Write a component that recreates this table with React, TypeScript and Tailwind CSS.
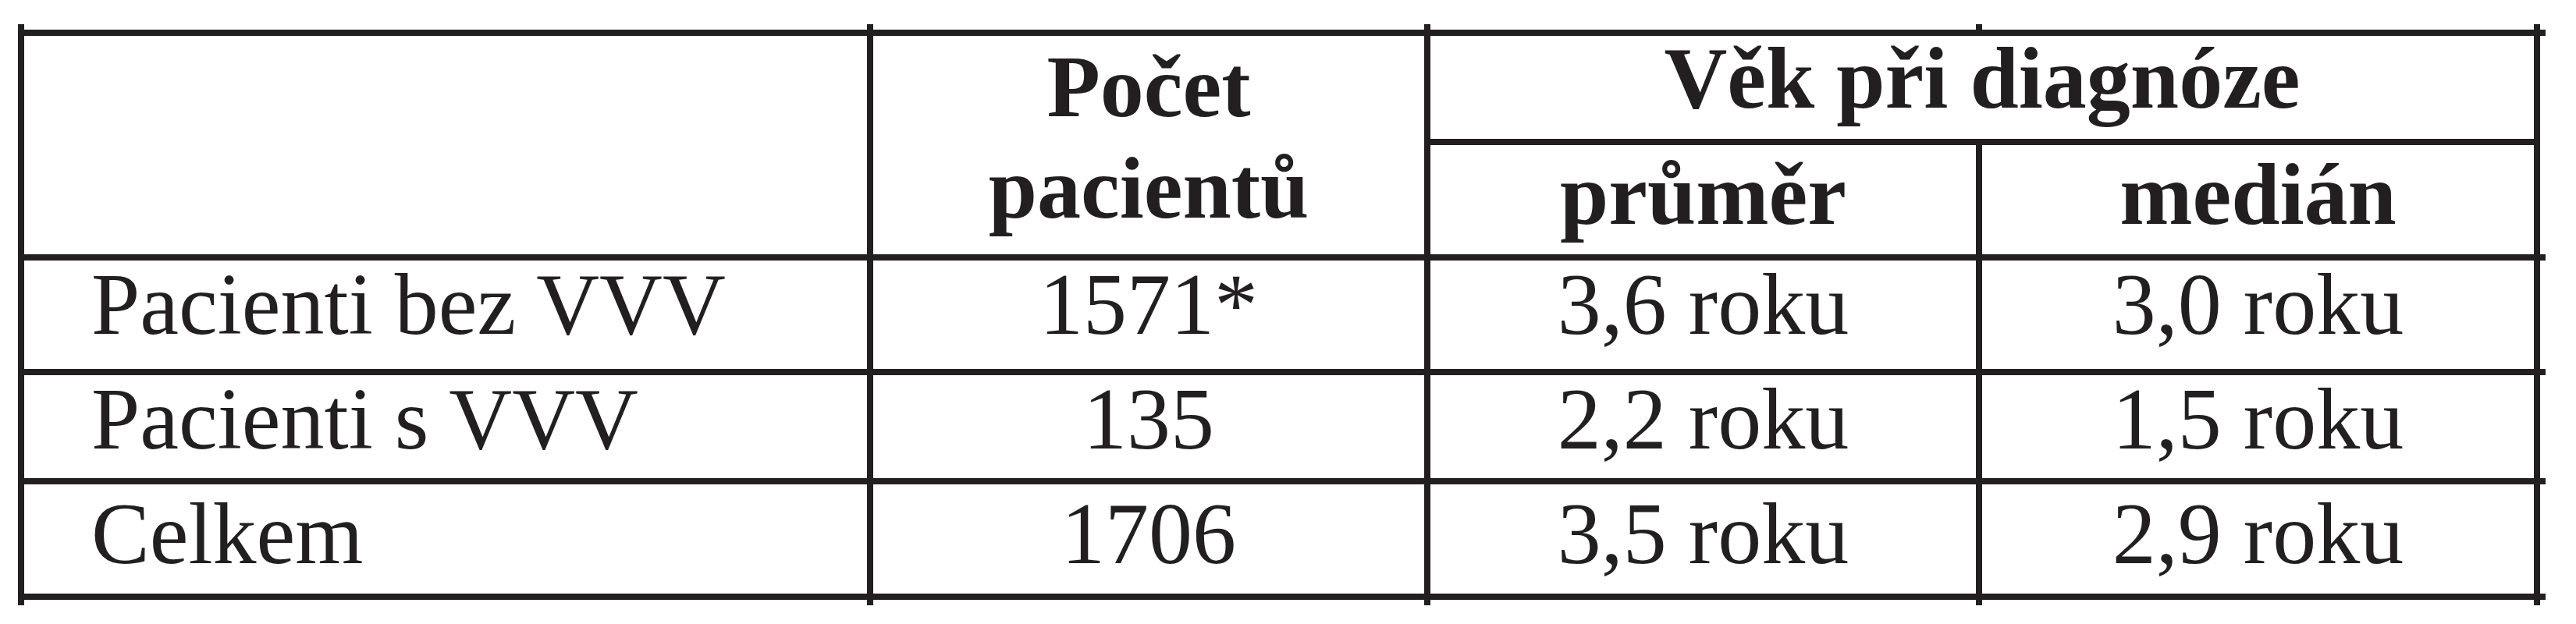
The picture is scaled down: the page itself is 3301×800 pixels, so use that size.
import React from "react";

const rows = [
  { label: "Pacienti bez VVV", n: "1571*", avg: "3,6 roku", med: "3,0 roku", h: "h-[147px]", pt: "pt-0" },
  { label: "Pacienti s VVV", n: "135", avg: "2,2 roku", med: "1,5 roku", h: "h-[140px]", pt: "pt-0" },
  { label: "Celkem", n: "1706", avg: "3,5 roku", med: "2,9 roku", h: "h-[148px]", pt: "pt-[7px]" },
];

function Stubs() {
  return (
    <div className="flex h-[7px]">
      <div className="w-[1088px] border-l-8 border-[#231f20]" />
      <div className="w-[714px] border-l-8 border-[#231f20]" />
      <div className="w-[707px] border-l-8 border-[#231f20]" />
      <div className="w-[723px] border-x-8 border-[#231f20]" />
    </div>
  );
}

export default function App() {
  return (
    <div className="min-h-[800px] w-[3301px] bg-white pt-[31px] pl-[23px] text-[#231f20] font-['Liberation_Serif','Times_New_Roman',serif] text-[112px] leading-[112px]">
      <div className="w-[3239px]">
        <Stubs />
        {/* header */}
        <div className="flex h-[296px] border-y-8 border-[#231f20]">
          <div className="w-[1088px] border-l-8 border-[#231f20]" />
          <div className="w-[714px] border-l-8 border-[#231f20] text-center font-bold leading-[130px]">
            Počet
            <br />
            pacientů
          </div>
          <div className="flex w-[1430px] flex-col border-x-8 border-[#231f20] font-bold">
            <div className="h-[140px] border-b-8 border-[#231f20] text-center leading-[108px]">
              Věk při diagnóze
            </div>
            <div className="flex flex-1">
              <div className="w-[699px] pt-[7px] text-center">průměr</div>
              <div className="flex-1 border-l-8 border-[#231f20] pt-[7px] text-center">medián</div>
            </div>
          </div>
        </div>
        {rows.map((r) => (
          <div key={r.label} className={`flex border-b-8 border-[#231f20] ${r.h}`}>
            <div className={`w-[1088px] border-l-8 border-[#231f20] pl-[86px] ${r.pt}`}>{r.label}</div>
            <div className={`w-[714px] border-l-8 border-[#231f20] text-center ${r.pt}`}>{r.n}</div>
            <div className={`w-[707px] border-l-8 border-[#231f20] text-center ${r.pt}`}>{r.avg}</div>
            <div className={`w-[723px] border-x-8 border-[#231f20] text-center ${r.pt}`}>{r.med}</div>
          </div>
        ))}
        <Stubs />
      </div>
    </div>
  );
}
